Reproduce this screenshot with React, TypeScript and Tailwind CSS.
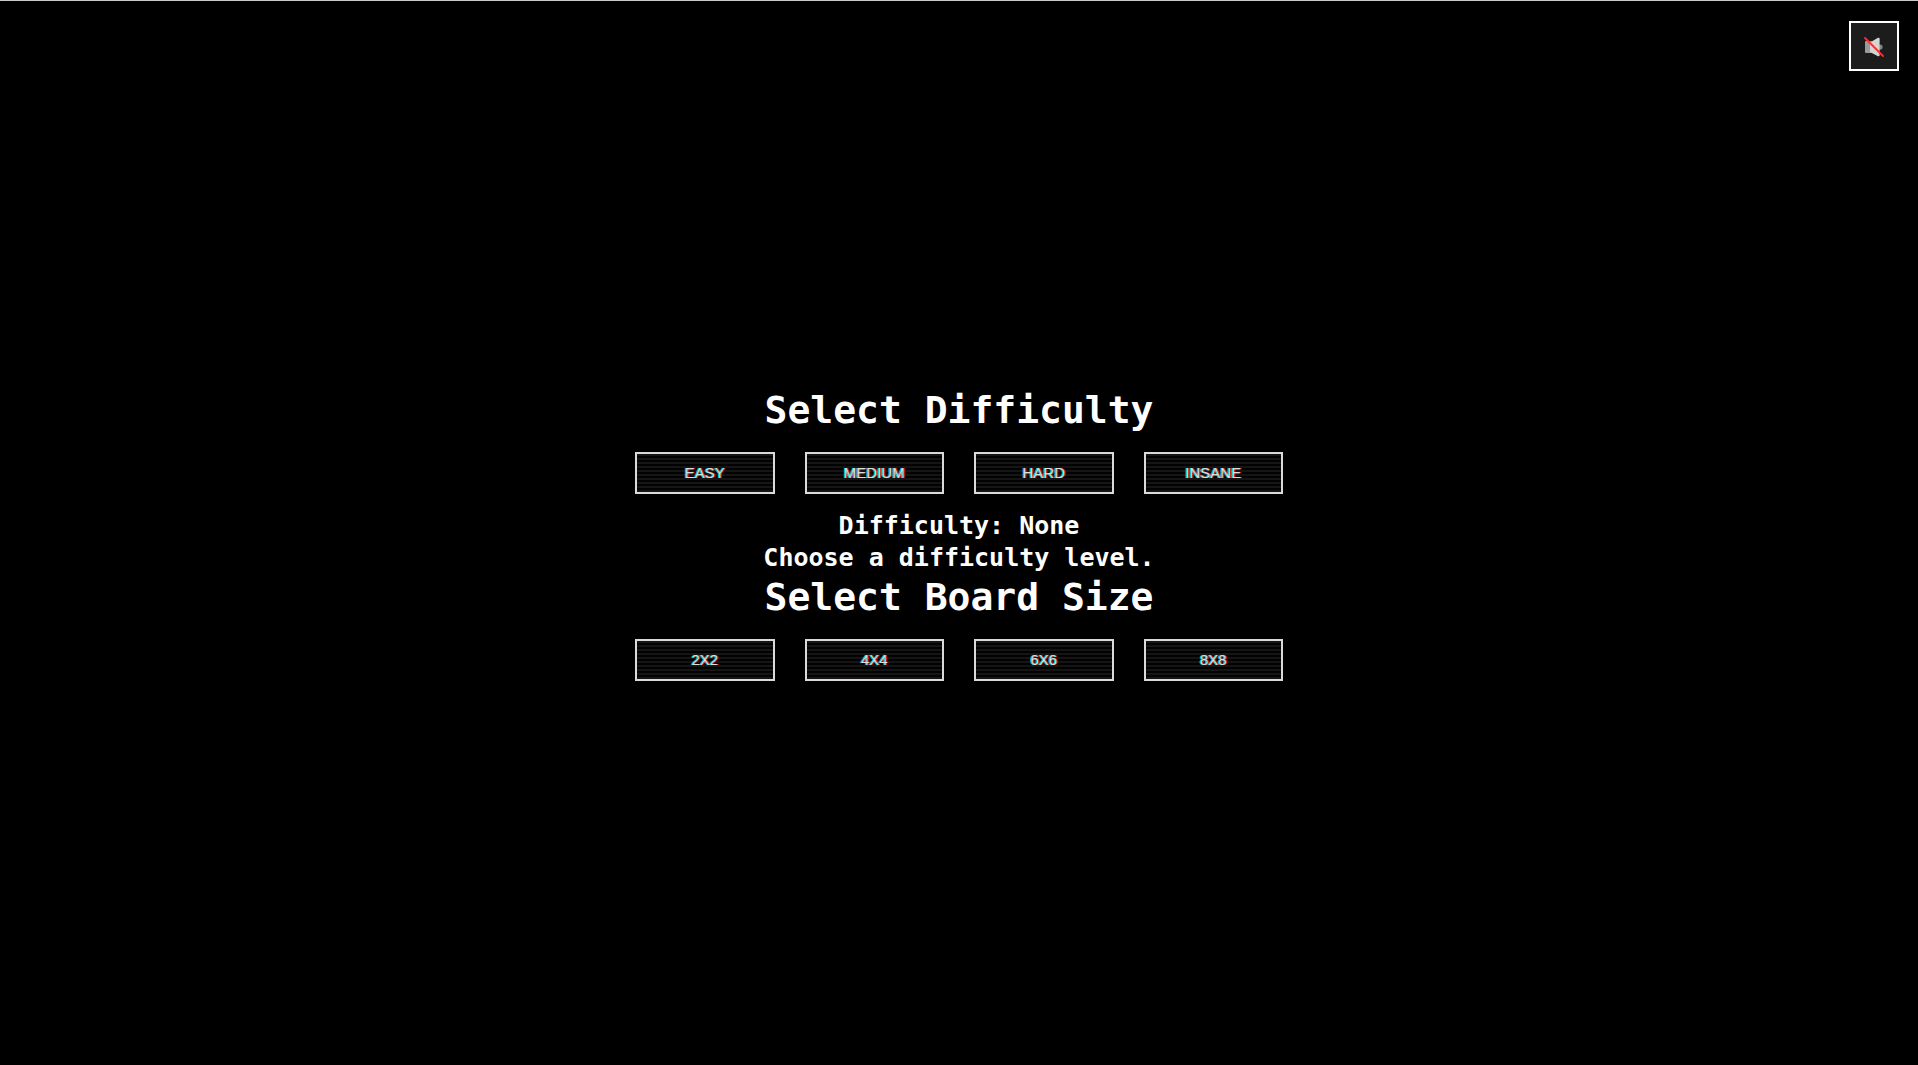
import { useState } from "react";

const difficulties = ["Easy", "Medium", "Hard", "Insane"];
const boardSizes = ["2x2", "4x4", "6x6", "8x8"];

function Heading({ children }: { children: string }) {
  return (
    <h2 className="pt-0.5 text-center font-['DejaVu_Sans_Mono',monospace] text-[38px] leading-9 font-bold">
      {children}
    </h2>
  );
}

function OptionRow({ options, onPick }: { options: string[]; onPick: (option: string) => void }) {
  return (
    <div className="mt-6 grid w-full max-w-[648px] grid-cols-4 gap-[30px]">
      {options.map((option) => (
        <button
          key={option}
          type="button"
          onClick={() => onPick(option)}
          className="h-[42px] border-2 border-[#dadada] bg-[repeating-linear-gradient(0deg,#151515_0,#151515_2px,#020202_2px,#020202_4px)] text-[15px] leading-5 text-[#dedede] uppercase [text-shadow:-1px_0_#00cccc,1px_0_#d02020]"
        >
          {option}
        </button>
      ))}
    </div>
  );
}

function MutedSpeaker() {
  return (
    <svg viewBox="0 0 20 20" className="size-5" aria-hidden="true">
      <circle cx="16" cy="10" r="2.6" fill="#858585" />
      <rect x="1" y="4" width="7" height="12" rx="1" fill="#9a9a9a" />
      <path d="M6 5.5 14 .8q1.6-.6 1.6 1v16.4q0 1.6-1.6 1L6 15Z" fill="#d4d4d4" />
      <path d="m1 1 18 18" stroke="#f92f2f" strokeWidth="1.8" strokeLinecap="round" />
    </svg>
  );
}

export default function App() {
  const [difficulty, setDifficulty] = useState("None");
  const [, setSize] = useState("");

  return (
    <div className="relative flex min-h-screen flex-col items-center justify-center border-t border-[#c8cccb] bg-black px-4 pt-1 font-['Liberation_Sans',sans-serif] text-white">
      <button
        type="button"
        aria-label="Unmute sound"
        className="absolute top-5 right-[19px] flex size-[50px] items-center justify-center border-2 border-white bg-[#1c1c1c] pt-0.5"
      >
        <MutedSpeaker />
      </button>
      <Heading>Select Difficulty</Heading>
      <OptionRow options={difficulties} onPick={setDifficulty} />
      <div className="mt-4 mb-[3px] text-center font-['DejaVu_Sans_Mono',monospace] text-[25px] leading-8 font-bold">
        <p>Difficulty: {difficulty}</p>
        <p>Choose a difficulty level.</p>
      </div>
      <Heading>Select Board Size</Heading>
      <OptionRow options={boardSizes} onPick={setSize} />
    </div>
  );
}
